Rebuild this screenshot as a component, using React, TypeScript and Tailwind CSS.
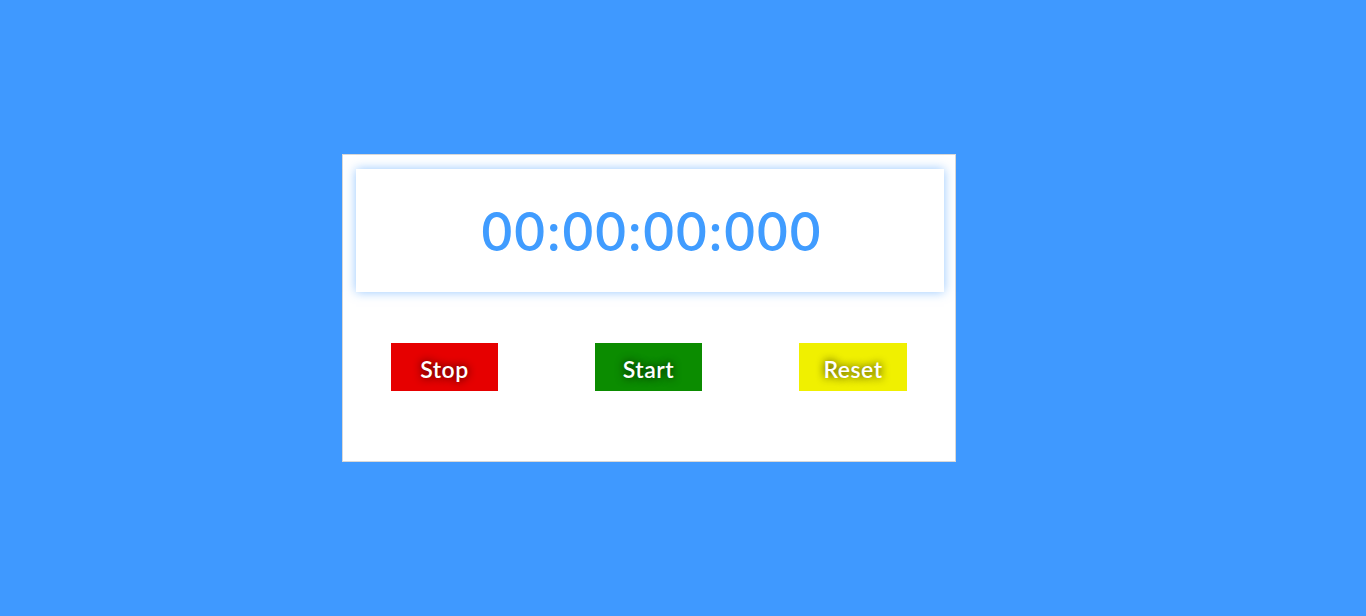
import React from 'react';

const buttons = [
  { label: 'Stop', bg: 'bg-[#e60000]', w: 'w-[107px]' },
  { label: 'Start', bg: 'bg-[#0b8c00]', w: 'w-[107px]' },
  { label: 'Reset', bg: 'bg-[#f0f000]', w: 'w-[108px]' },
];

const App: React.FC = () => {
  return (
    <div className="min-h-[616px] w-full bg-[#3f99ff] flex items-center justify-center font-['Lato',sans-serif]">
      <div className="w-[614px] h-[308px] bg-white border border-[#d8d8d8] pt-[14px] pl-[13px] pr-[11px] -mt-[1px] ml-[-68px]">
        <div className="h-[123px] bg-white flex items-center justify-center shadow-[0_0_10px_rgba(63,153,255,0.55)]">
          <span className="text-[53px] leading-none text-[#409cff] font-semibold tracking-[2px] pl-[4px]">00:00:00:000</span>
        </div>
        <div className="flex justify-center gap-[97px] mt-[51px] pr-[2px]">
          {buttons.map((b) => (
            <button
              key={b.label}
              className={`${b.bg} ${b.w} h-[48px] pt-[5px] text-white text-[23px] font-semibold tracking-[0.5px] [text-shadow:0_0_8px_rgba(0,0,0,0.85)]`}
            >
              {b.label}
            </button>
          ))}
        </div>
      </div>
    </div>
  );
};

export default App;
